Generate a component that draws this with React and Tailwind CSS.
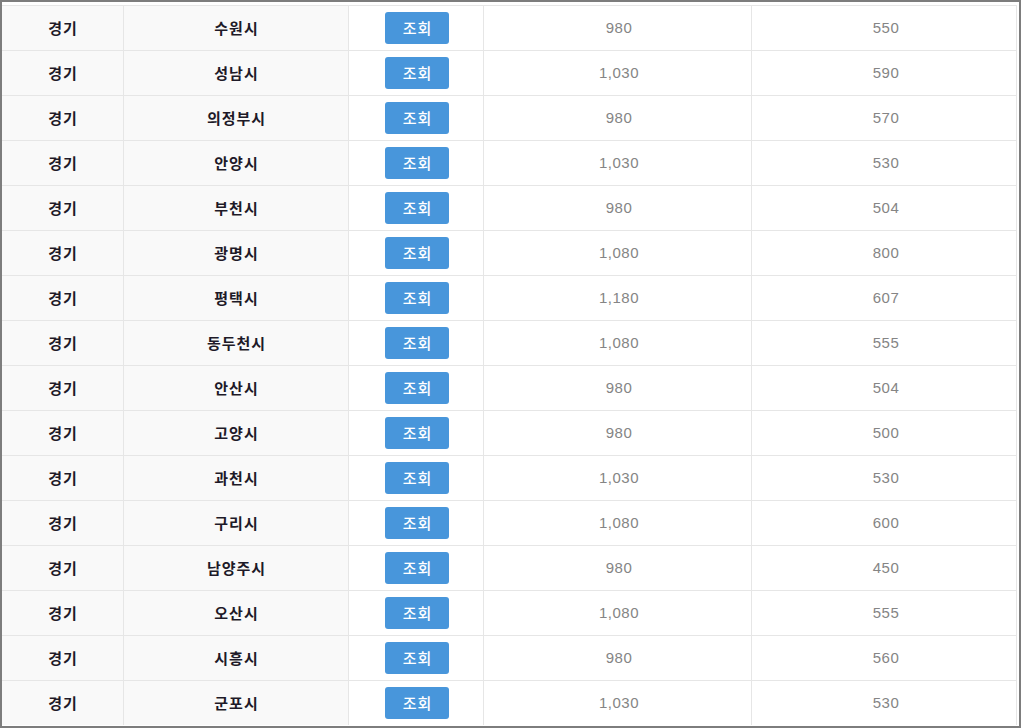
import React from 'react';

const rows = [
  ['수원시', '980', '550'],
  ['성남시', '1,030', '590'],
  ['의정부시', '980', '570'],
  ['안양시', '1,030', '530'],
  ['부천시', '980', '504'],
  ['광명시', '1,080', '800'],
  ['평택시', '1,180', '607'],
  ['동두천시', '1,080', '555'],
  ['안산시', '980', '504'],
  ['고양시', '980', '500'],
  ['과천시', '1,030', '530'],
  ['구리시', '1,080', '600'],
  ['남양주시', '980', '450'],
  ['오산시', '1,080', '555'],
  ['시흥시', '980', '560'],
  ['군포시', '1,030', '530'],
];

const KR = "font-['Malgun_Gothic','Noto_Sans_CJK_KR',sans-serif]";
const NUM = "font-['Liberation_Sans',sans-serif]";

const App = () => {
  return (
    <div className="w-[1021px] h-[728px] border-2 border-[#7d7d7d] bg-white pt-[3px] pr-[2px] overflow-hidden">
      {rows.map(([city, price, count], idx) => (
        <div
          key={idx}
          className="grid grid-cols-[121px_225px_135px_268px_266px] h-[45px] border-t border-[#e6e6e6]"
        >
          <div className={`flex items-center justify-center bg-[#f9f9f9] pl-[1px] text-[15px] tracking-[1px] font-bold text-[#1e1a28] ${KR}`}>
            경기
          </div>
          <div className={`flex items-center justify-center bg-[#f9f9f9] border-l border-[#e6e6e6] pl-[1px] text-[15px] tracking-[1px] font-bold text-[#1e1a28] ${KR}`}>
            {city}
          </div>
          <div className="flex items-center justify-center border-l border-[#e6e6e6] pl-[2px]">
            <button className={`w-[64px] h-[32px] rounded-[3px] bg-[#4896db] pl-[1px] text-white text-[15px] tracking-[1px] font-medium ${KR}`}>
              조회
            </button>
          </div>
          <div className={`flex items-center justify-center border-l border-[#e6e6e6] pl-[3px] text-[15px] tracking-[0.5px] text-[#858585] ${NUM}`}>
            {price}
          </div>
          <div className={`flex items-center justify-center border-l border-r border-[#e6e6e6] pl-[4px] text-[15px] tracking-[0.5px] text-[#858585] ${NUM}`}>
            {count}
          </div>
        </div>
      ))}
    </div>
  );
};

export default App;
